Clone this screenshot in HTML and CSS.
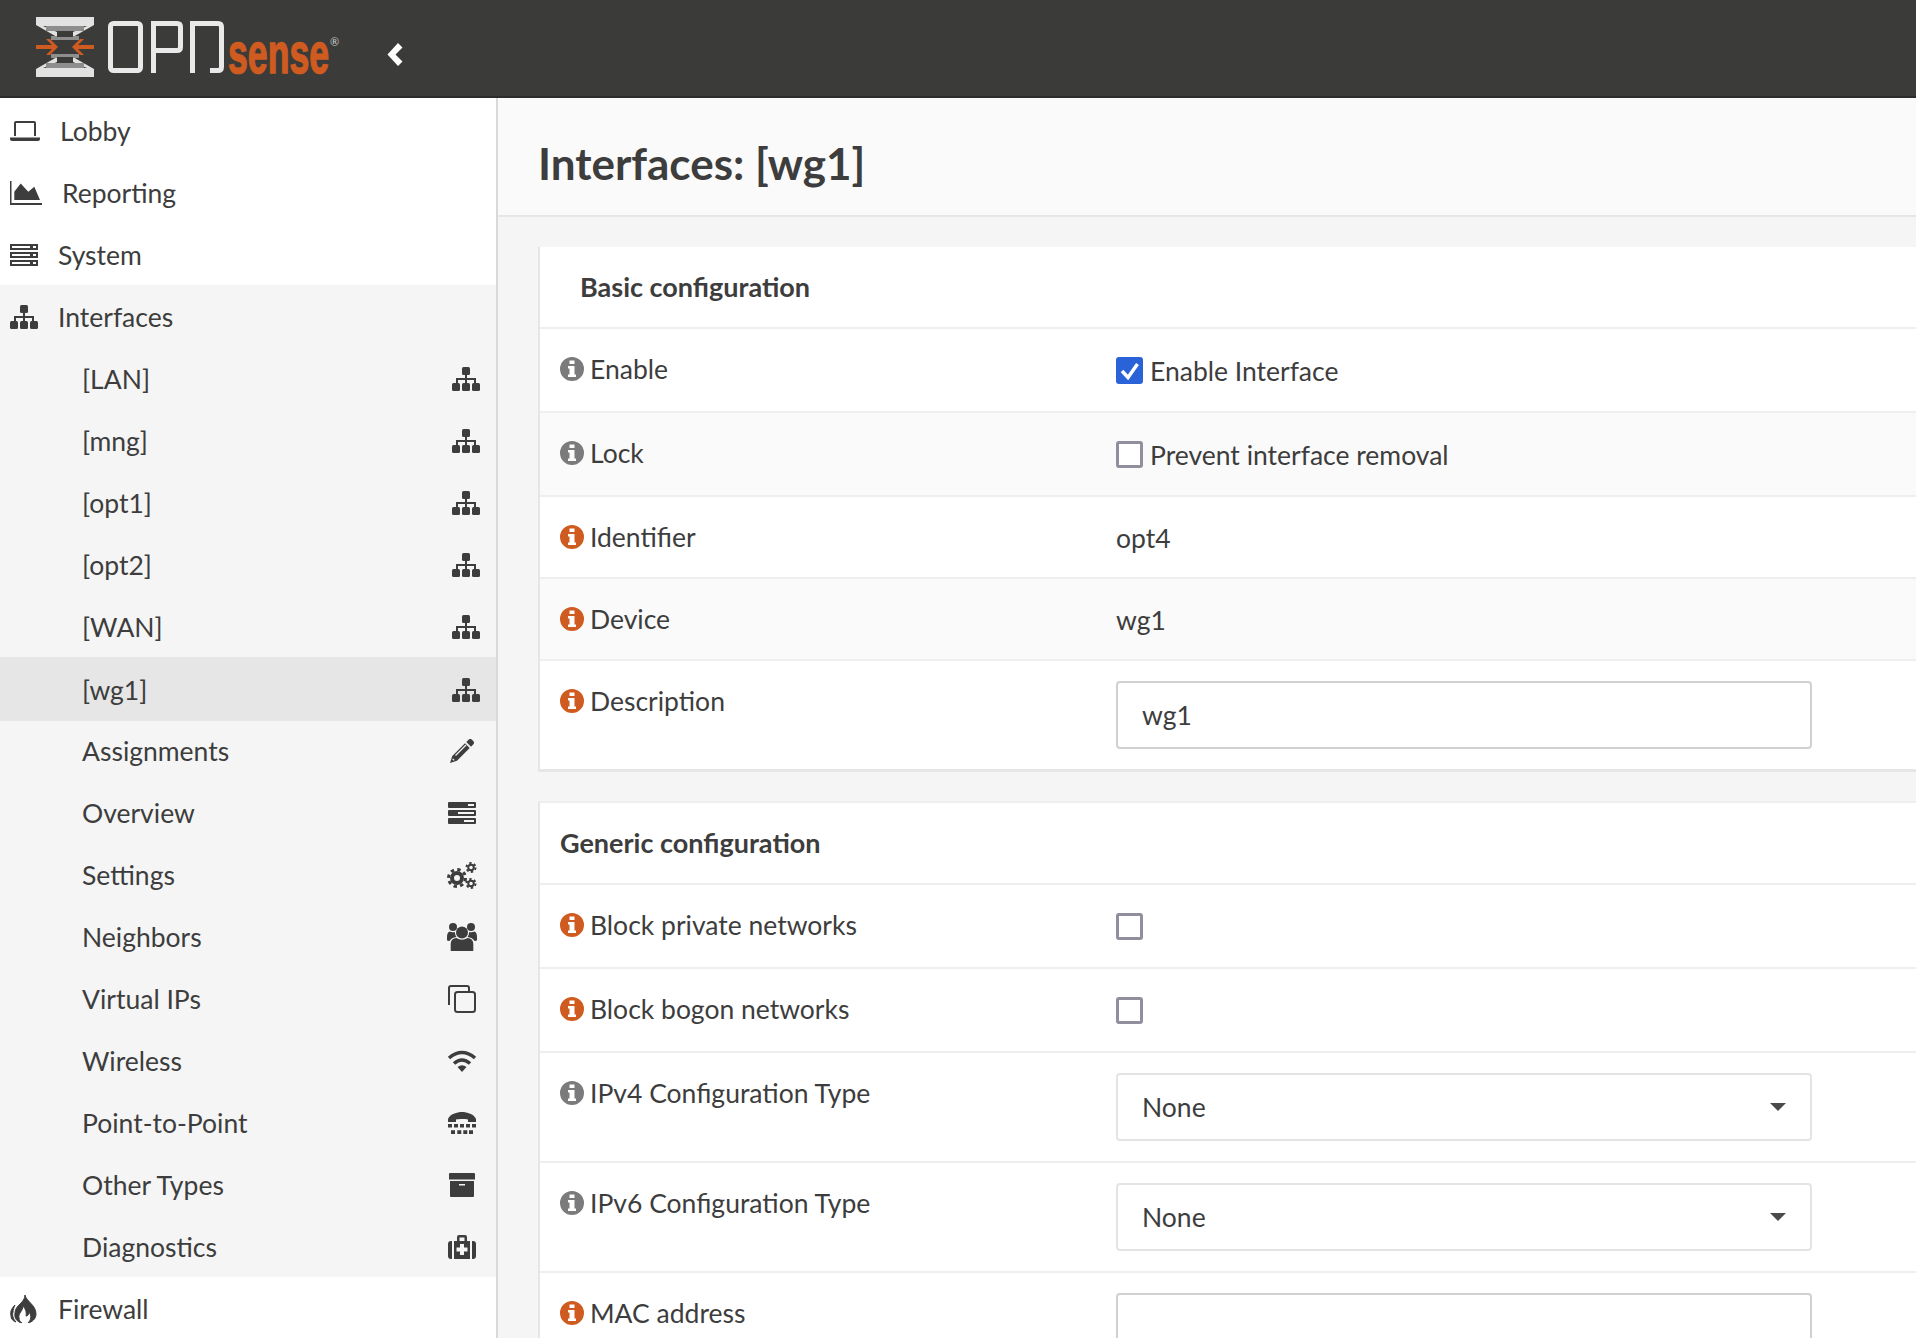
FILE: index.html
```html
<!DOCTYPE html>
<html>
<head>
<title>Interfaces: [wg1]</title>
<link rel="stylesheet" href="styles.css">
</head>
<body>
<svg class="sprites" width="0" height="0">
  <symbol id="i-net" viewBox="0 0 28 24">
    <rect x="10" y="0" width="8" height="8" rx="1.500"/>
    <rect x="0" y="16" width="8" height="8" rx="1.500"/>
    <rect x="10" y="16" width="8" height="8" rx="1.500"/>
    <rect x="20" y="16" width="8" height="8" rx="1.500"/>
    <path d="M13 8h2v3h9v5h-2v-3h-7v3h-2v-3H6v3H4v-5h9z"/>
  </symbol>
  <symbol id="i-info" viewBox="0 0 24 24">
    <path fill-rule="evenodd" d="M12 0a12 12 0 1 1 0 24a12 12 0 0 1 0-24zM9.500 3.500v3.500h5V3.500zM8 9v2.500h1.500v6H8V20h8v-2.500h-1.500V9z"/>
  </symbol>
</svg>

<header class="topbar">
  <svg class="logo-mark" viewBox="0 0 58 60">
    <path d="M0 0H58V8L37 20V15L51 9H7L21 15V20L0 8zM0 60H58V52L37 40V45L51 51H7L21 45V40L0 52z" fill="#e2e2e2"/>
    <path d="M10 9H48V14H10zM10 46H48V51H10zM15 19H43V23H15zM15 37H43V41H15z" fill="#8e8e8e"/>
    <path d="M21 15H37V20H21zM21 40H37V45H21z" fill="#3b3b3a"/>
    <path d="M0 28H16L10 22H14L22 30 14 38H10L16 32H0z" fill="#cf5b20"/>
    <path d="M58 28H42L48 22H44L36 30 44 38H48L42 32H58z" fill="#cf5b20"/>
  </svg>
  <div class="wordmark">
    <svg class="open" viewBox="0 0 116 52">
      <rect x="2.500" y="2.500" width="30" height="47" rx="3" fill="none" stroke="#e9e9e9" stroke-width="5"/>
      <path d="M45.500 52V2.500H69Q72.500 2.500 72.500 6V26Q72.500 29.500 69 29.500H48" fill="none" stroke="#e9e9e9" stroke-width="5"/>
      <path d="M84.500 52V2.500H110Q113.500 2.500 113.500 6V46Q113.500 49.500 110 49.500H102" fill="none" stroke="#e9e9e9" stroke-width="5"/>
    </svg>
    <span class="sense">sense</span><span class="reg">®</span>
  </div>
  <svg class="collapse" viewBox="0 0 16 25"><path d="M11 1L15.500 5.500 8.500 12.500 15.500 19.500 11 24 .500 12.500z" fill="#fff"/></svg>
</header>

<div class="layout">
  <nav class="sidebar">
    <a class="nav-item">
      <svg class="nav-icon" width="30" height="20" viewBox="0 0 30 20"><path d="M6 0h18a2 2 0 0 1 2 2v13h-2V2H6v13H4V2a2 2 0 0 1 2-2zM0 16.500h30v1.500a2 2 0 0 1-2 2H2a2 2 0 0 1-2-2z"/></svg>
      <span>Lobby</span>
    </a>
    <a class="nav-item">
      <svg class="nav-icon" width="32" height="24" viewBox="0 0 32 24"><path d="M0 0h1.500v22H32v2H0z"/><path d="M4.300 19V10.700L10.700 2.500 18.300 10.700 24.300 5.700 30 19z"/></svg>
      <span>Reporting</span>
    </a>
    <a class="nav-item">
      <svg class="nav-icon" width="28" height="22" viewBox="0 0 28 22"><path fill-rule="evenodd" d="M0 0h28v6H0zM2 2v2h18V2zM23 2v2h3V2zM0 8h28v6H0zM2 10v2h18v-2zM23 10v2h3v-2zM0 16h28v6H0zM2 18v2h18v-2zM23 18v2h3v-2z"/></svg>
      <span>System</span>
    </a>

    <div class="nav-group">
      <a class="nav-item">
        <svg class="nav-icon" width="28" height="24"><use href="#i-net"/></svg>
        <span>Interfaces</span>
      </a>
      <a class="sub-item"><span>[LAN]</span><svg class="sub-icon net" height="24"><use href="#i-net"/></svg></a>
      <a class="sub-item"><span>[mng]</span><svg class="sub-icon net" height="24"><use href="#i-net"/></svg></a>
      <a class="sub-item"><span>[opt1]</span><svg class="sub-icon net" height="24"><use href="#i-net"/></svg></a>
      <a class="sub-item"><span>[opt2]</span><svg class="sub-icon net" height="24"><use href="#i-net"/></svg></a>
      <a class="sub-item"><span>[WAN]</span><svg class="sub-icon net" height="24"><use href="#i-net"/></svg></a>
      <a class="sub-item active"><span>[wg1]</span><svg class="sub-icon net" height="24"><use href="#i-net"/></svg></a>
      <a class="sub-item"><span>Assignments</span>
        <svg class="sub-icon" height="24" viewBox="0 0 24 24">
          <path d="M18.500.8a2.500 2.500 0 0 1 3.500 0l1.200 1.200a2.500 2.500 0 0 1 0 3.500L21 7.700 16.300 3zM15 4.300 19.700 9 7 21.700 0 24 2.300 17z"/>
          <path d="M5.500 16.500 16 6M2.600 19.800l1.600 1.600" stroke="#f5f5f5" stroke-width="1.200" fill="none"/>
        </svg></a>
      <a class="sub-item"><span>Overview</span>
        <svg class="sub-icon" height="22" viewBox="0 0 28 22"><path fill-rule="evenodd" d="M1 0h26a1 1 0 0 1 1 1v4a1 1 0 0 1-1 1H1a1 1 0 0 1-1-1V1a1 1 0 0 1 1-1zM20 2v2h6V2zM1 8h26a1 1 0 0 1 1 1v4a1 1 0 0 1-1 1H1a1 1 0 0 1-1-1V9a1 1 0 0 1 1-1zM10 10v2h16v-2zM1 16h26a1 1 0 0 1 1 1v4a1 1 0 0 1-1 1H1a1 1 0 0 1-1-1v-4a1 1 0 0 1 1-1zM16 18v2h10v-2z"/></svg></a>
      <a class="sub-item"><span>Settings</span>
        <svg class="sub-icon line" height="27" viewBox="0 0 30 27">
          <circle cx="10" cy="16" r="5" stroke-width="4"/>
          <circle cx="10" cy="16" r="8.500" stroke-width="3" stroke-dasharray="3.400 3.270"/>
          <circle cx="24" cy="5.500" r="2.750" stroke-width="2"/>
          <circle cx="24" cy="5.500" r="4.500" stroke-width="2" stroke-dasharray="2.400 2.310"/>
          <circle cx="24" cy="21.500" r="2.750" stroke-width="2"/>
          <circle cx="24" cy="21.500" r="4.500" stroke-width="2" stroke-dasharray="2.400 2.310"/>
        </svg></a>
      <a class="sub-item"><span>Neighbors</span>
        <svg class="sub-icon" height="28" viewBox="0 0 30 28">
          <circle cx="6" cy="4" r="4"/><circle cx="24" cy="4" r="4"/><circle cx="15" cy="9.500" r="6"/>
          <path d="M3.700 28V21Q3.700 15.500 9.500 15 15 18.500 20.500 15 26.300 15.500 26.300 21V28z"/>
          <path d="M0 14Q0 9.500 2.500 8.500 5 9.800 7.800 9 8 12 9.500 14 4.500 14.500 2.500 18 0 18 0 17zM30 14Q30 9.500 27.500 8.500 25 9.800 22.200 9 22 12 20.500 14 25.500 14.500 27.500 18 30 18 30 17z"/>
        </svg></a>
      <a class="sub-item"><span>Virtual IPs</span>
        <svg class="sub-icon line" height="28" viewBox="0 0 28 28" stroke-width="2">
          <path d="M1 20V3a2 2 0 0 1 2-2h16a2 2 0 0 1 2 2v4"/>
          <rect x="7" y="7" width="20" height="20" rx="2.500"/>
        </svg></a>
      <a class="sub-item"><span>Wireless</span>
        <svg class="sub-icon" height="22" viewBox="0 0 30 22">
          <path d="M2 8Q15-3 28 8M7 13.500Q15 6.500 23 13.500" fill="none" stroke="currentColor" stroke-width="3.600"/>
          <path d="M10.500 17Q15 13.500 19.500 17L15 22z"/>
        </svg></a>
      <a class="sub-item"><span>Point-to-Point</span>
        <svg class="sub-icon" height="22" viewBox="0 0 28 22">
          <path d="M0 10V7C2 2 9 0 14 0S26 2 28 7V10H20V7.500C17 6.800 11 6.800 8 7.500V10z"/>
          <path d="M0 12h4v3.500H0zM6 12h4v3.500H6zM12 12h4v3.500h-4zM18 12h4v3.500h-4zM24 12h4v3.500h-4zM3 18.300h4V22H3zM9.300 18.300h4V22h-4zM15.300 18.300h4V22h-4zM21 18.300h4V22h-4z"/>
        </svg></a>
      <a class="sub-item"><span>Other Types</span>
        <svg class="sub-icon" height="24" viewBox="0 0 26 24"><path fill-rule="evenodd" d="M1 0h24a1 1 0 0 1 1 1v5.500H0V1a1 1 0 0 1 1-1zM1 8h24v15a1 1 0 0 1-1 1H2a1 1 0 0 1-1-1zM10 11v1.500h6V11z"/></svg></a>
      <a class="sub-item"><span>Diagnostics</span>
        <svg class="sub-icon" height="24" viewBox="0 0 28 24">
          <path d="M0 9a3 3 0 0 1 3-3h1v18H3a3 3 0 0 1-3-3zM28 9a3 3 0 0 0-3-3h-1v18h1a3 3 0 0 0 3-3zM9 6V2a2 2 0 0 1 2-2h6a2 2 0 0 1 2 2v4h-2.500V2.500h-5V6z"/>
          <path fill-rule="evenodd" d="M6 6H22V24H6zM12 9v3.500H8.500v4H12V20h4v-3.500h3.500v-4H16V9z"/>
        </svg></a>
    </div>

    <a class="nav-item">
      <svg class="nav-icon" width="28" height="28" viewBox="0 0 28 28"><path stroke="#3d3d3d" d="M15 0C16 6 26 10 26 19 26 24 22 27 18 28 21 25 22 21 19 17 19 20 17 21 16 21 17 17 15 13 13 11 13 16 8 18 9 23 9 25 10 27 12 28 7 27 4 23 5 18 5 10 15 8 15 0z"/><path stroke="#3d3d3d" d="M5 10C2 13 0 16 1 21 1 24 3 26 6 27 3 24 2 20 3 17 3 15 4 12 5 10z"/></svg>
      <span>Firewall</span>
    </a>
  </nav>

  <main class="content">
    <div class="page-head"><h1>Interfaces: [wg1]</h1></div>
    <div class="page-body">
      <section class="panel panel-first">
        <h2 class="panel-title indent">Basic configuration</h2>
        <div class="row h84">
          <div class="label"><svg class="info grey" width="24" height="24"><use href="#i-info"/></svg>Enable</div>
          <div class="value"><span class="check on"><svg viewBox="0 0 27 27" width="27" height="27"><path d="M6 14l6 6.500L21.500 7" fill="none" stroke="#fff" stroke-width="3.500"/></svg></span>Enable Interface</div>
        </div>
        <div class="row h84 alt">
          <div class="label"><svg class="info grey" width="24" height="24"><use href="#i-info"/></svg>Lock</div>
          <div class="value"><span class="check"></span>Prevent interface removal</div>
        </div>
        <div class="row h82">
          <div class="label"><svg class="info" width="24" height="24"><use href="#i-info"/></svg>Identifier</div>
          <div class="value plain">opt4</div>
        </div>
        <div class="row h82 alt">
          <div class="label"><svg class="info" width="24" height="24"><use href="#i-info"/></svg>Device</div>
          <div class="value plain">wg1</div>
        </div>
        <div class="row last">
          <div class="label"><svg class="info" width="24" height="24"><use href="#i-info"/></svg>Description</div>
          <div class="value boxed"><div class="field">wg1</div></div>
        </div>
      </section>

      <section class="panel">
        <h2 class="panel-title">Generic configuration</h2>
        <div class="row h84">
          <div class="label"><svg class="info" width="24" height="24"><use href="#i-info"/></svg>Block private networks</div>
          <div class="value"><span class="check"></span></div>
        </div>
        <div class="row h84">
          <div class="label"><svg class="info" width="24" height="24"><use href="#i-info"/></svg>Block bogon networks</div>
          <div class="value"><span class="check"></span></div>
        </div>
        <div class="row tall">
          <div class="label"><svg class="info grey" width="24" height="24"><use href="#i-info"/></svg>IPv4 Configuration Type</div>
          <div class="value boxed"><div class="field select">None<i class="caret"></i></div></div>
        </div>
        <div class="row tall">
          <div class="label"><svg class="info grey" width="24" height="24"><use href="#i-info"/></svg>IPv6 Configuration Type</div>
          <div class="value boxed"><div class="field select">None<i class="caret"></i></div></div>
        </div>
        <div class="row tall">
          <div class="label"><svg class="info" width="24" height="24"><use href="#i-info"/></svg>MAC address</div>
          <div class="value boxed"><div class="field"></div></div>
        </div>
      </section>
    </div>
  </main>
</div>
</body>
</html>
```

FILE: styles.css
```css
html, body {
    margin: 0;
    height: 1338px;
    overflow: hidden;
}

body {
    background-color: #f5f5f5;
    color: #3d3d3d;
    font-family: Lato, "Liberation Sans", sans-serif;
    font-size: 26.500px;
}

.sprites {
    display: block;
}

/* top bar */
.topbar {
    display: flex;
    align-items: center;
    height: 98px;
    box-sizing: border-box;
    background-color: #3b3b3a;
    border-bottom: 2px solid #2c2c2c;
    padding: 0 0 2px 36px;
}

.logo-mark {
    width: 58px;
    height: 60px;
    margin-right: 14px;
}

.wordmark {
    display: flex;
    align-items: flex-start;
    height: 52px;
}

.open {
    width: 116px;
    height: 52px;
}

.sense {
    font-family: "Liberation Sans", sans-serif;
    font-weight: bold;
    font-size: 57px;
    line-height: 52px;
    -webkit-text-stroke: 1.500px #cf5b20;
    color: #cf5b20;
    transform: scaleX(.625);
    transform-origin: left;
    margin: 6px 0 0 4px;
    width: 102px;
}

.reg {
    font-size: 11px;
    line-height: 11px;
    color: #cccccc;
    margin-top: 15px;
    width: 8px;
}

.collapse {
    width: 16px;
    height: 25px;
    margin: 15px 0 0 49px;
}

/* side menu */
.layout {
    display: flex;
    height: 1240px;
    overflow: hidden;
}

.sidebar {
    width: 496px;
    flex-shrink: 0;
    background-color: #fff;
    border-right: 2px solid #d9d9d9;
    padding-top: 1px;
}

.nav-item, .sub-item {
    display: flex;
    align-items: center;
    height: 62px;
    box-sizing: border-box;
    padding-top: 2px;
}

.nav-item {
    padding-left: 10px;
}

.sub-item {
    justify-content: space-between;
    padding-left: 82px;
}

.nav-group {
    background-color: #f5f5f5;
}

.active {
    background-color: #e6e6e6;
    height: 64px;
    margin-bottom: -2px;
}

.nav-icon {
    fill: #3d3d3d;
    flex-shrink: 0;
    margin-right: 20px;
}

.sub-icon {
    width: 30px;
    fill: #3d3d3d;
    color: #3d3d3d;
    margin-right: 19px;
    flex-shrink: 0;
}

.sub-icon.net {
    width: 28px;
    margin-right: 16px;
}

.sub-icon.line {
    fill: none;
    stroke: currentColor;
}

/* page */
.content {
    flex: 1;
    min-width: 0;
}

.page-head {
    height: 119px;
    background-color: #fafafa;
    border-bottom: 2px solid #e6e6e6;
    box-sizing: border-box;
    padding: 12px 0 0 40px;
    display: flex;
    align-items: center;
}

h1 {
    margin: 0;
    font-size: 44px;
    font-weight: 700;
}

.page-body {
    padding: 30px 0 0 40px;
}

.panel {
    background-color: #fff;
    border-left: 2px solid #e6e6e6;
    border-top: 2px solid #eee;
    margin-bottom: 29px;
}

.panel-first {
    border-top: none;
}

.panel-title {
    margin: 0;
    height: 82px;
    box-sizing: border-box;
    display: flex;
    align-items: center;
    padding: 0 0 2px 20px;
    font-size: 27px;
    font-weight: 700;
    border-bottom: 2px solid #eee;
}

.panel-title.indent {
    padding-left: 40px;
}

.row {
    display: flex;
    box-sizing: border-box;
    border-bottom: 2px solid #eee;
}

.alt {
    background-color: #fafafa;
}

.h84 {
    height: 84px;
}

.h82 {
    height: 82px;
}

.last {
    height: 111px;
    border-bottom: 3px solid #e6e6e6;
}

.tall {
    height: 110px;
}

.label {
    width: 576px;
    flex-shrink: 0;
    box-sizing: border-box;
    padding: 24px 0 0 20px;
    display: flex;
    align-items: flex-start;
    line-height: 32px;
}

.info {
    fill: #cf5b20;
    margin: 4px 6px 0 0;
    flex-shrink: 0;
}

.info.grey {
    fill: #7b7b7b;
}

.value {
    padding-top: 26px;
    display: flex;
    align-items: flex-start;
    line-height: 32px;
}

.value.plain {
    padding-top: 25px;
}

.value.boxed {
    padding-top: 20px;
}

.check {
    width: 27px;
    height: 27px;
    box-sizing: border-box;
    border: 3px solid #8f8f9d;
    border-radius: 3px;
    background-color: #fff;
    margin: 2px 7px 0 0;
    display: block;
}

.check.on {
    background-color: #2a63d8;
    border: none;
}

.field {
    width: 696px;
    height: 68px;
    box-sizing: border-box;
    border: 2px solid #d0d0d0;
    border-radius: 4px;
    background-color: #fff;
    padding: 0 24px;
    display: flex;
    align-items: center;
    justify-content: space-between;
}

.field.select {
    border-color: #e4e4e4;
}

.caret {
    width: 0;
    height: 0;
    border-left: 8px solid transparent;
    border-right: 8px solid transparent;
    border-top: 8px solid #4a4a4a;
}
```
